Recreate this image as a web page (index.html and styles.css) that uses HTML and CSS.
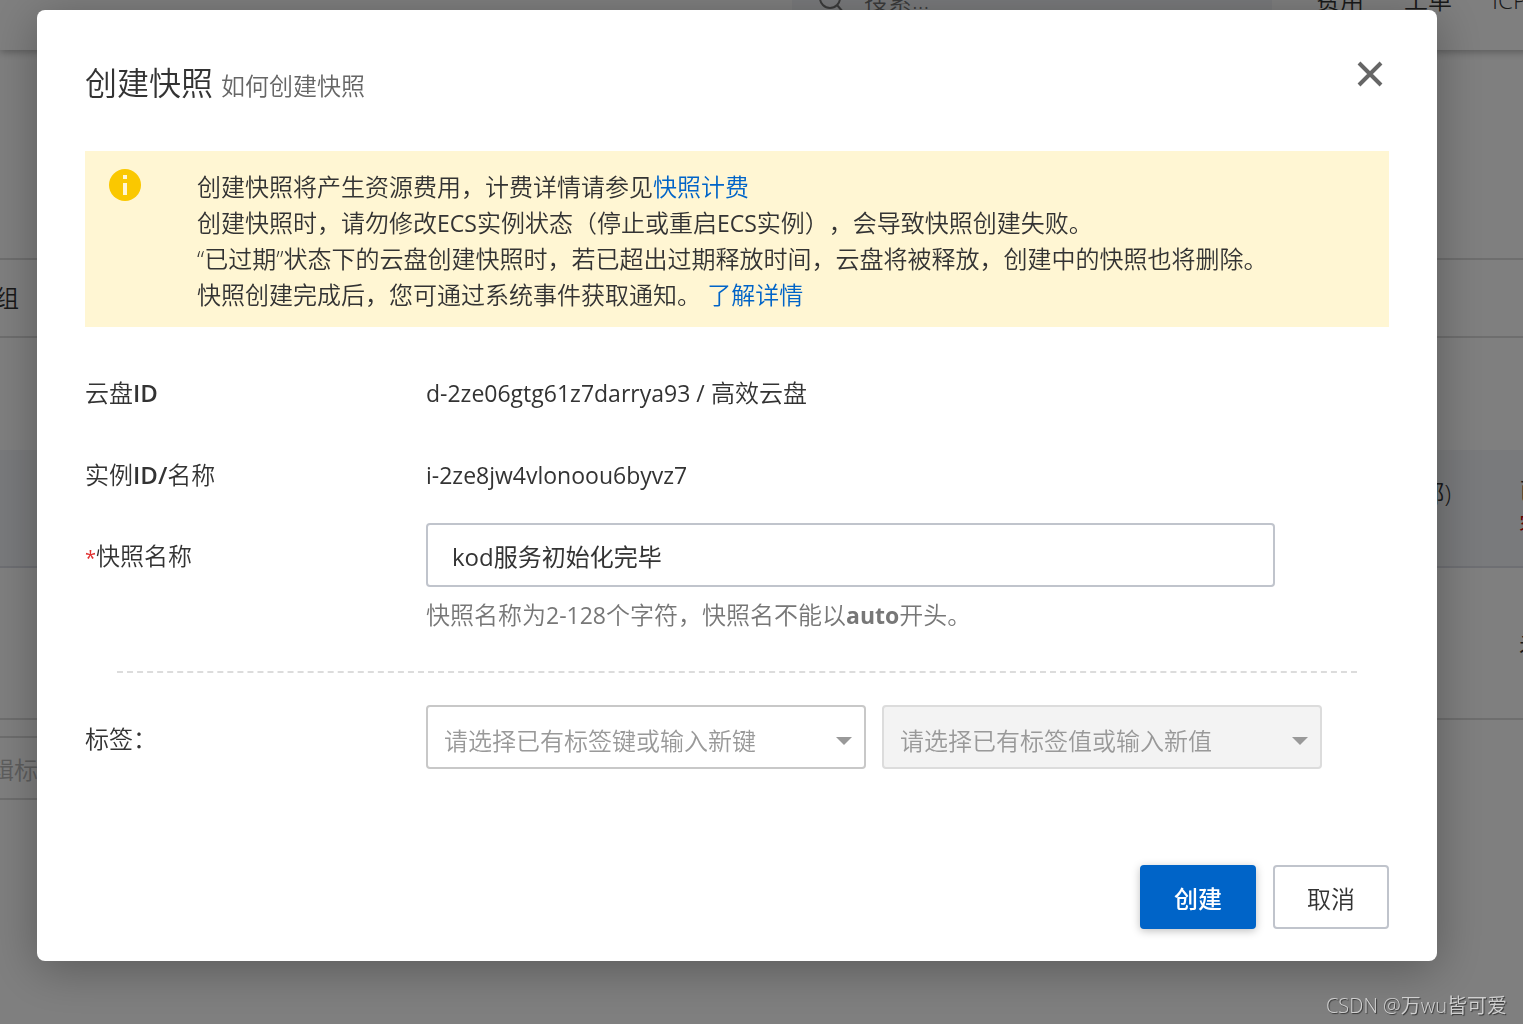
FILE: index.html
```html
<!DOCTYPE html>
<html lang="zh-CN">
<head>
<meta charset="utf-8">
<meta name="viewport" content="width=device-width, initial-scale=1">
<title>创建快照</title>
<link rel="stylesheet" href="styles.css">
</head>
<body>
<div class="console">
  <header class="topbar">
    <div class="search">
      <svg class="search-icon" viewBox="0 0 26 26" aria-hidden="true"><circle cx="12" cy="11" r="10"/><path d="M19 18l6 7"/></svg>
      <span>搜索...</span>
    </div>
    <nav class="topnav"><a href="#">费用</a><a href="#">工单</a><a href="#">ICP备案</a></nav>
  </header>
  <main class="list">
    <div class="row row-head"><span class="cell-first">资源组</span></div>
    <div class="row row-filter"></div>
    <div class="row row-selected"><span class="cell-mid">(全部)</span><span class="cell-last">已挂载<br><em>容量</em></span></div>
    <div class="row row-plain"><span class="cell-last">未设置</span></div>
    <div class="bulk"><button type="button" class="bulk-button">编辑标签</button></div>
  </main>
</div>

<div class="overlay">
  <section class="dialog" role="dialog" aria-modal="true" aria-labelledby="dialog-title">
    <header class="dialog-head">
      <h1 id="dialog-title">创建快照</h1>
      <a class="help" href="#">如何创建快照</a>
      <button type="button" class="close" aria-label="关闭">
        <svg viewBox="0 0 28 28" aria-hidden="true"><path d="M3 3l22 22M25 3L3 25"/></svg>
      </button>
    </header>

    <div class="notice">
      <svg class="notice-icon" viewBox="0 0 32 32" aria-hidden="true"><circle cx="16" cy="16" r="16" fill="#fac800"/><path fill="#fff6d3" d="M14 6h4v4h-4zM14 14h4v12h-4z"/></svg>
      <div class="notice-text">
        <p>创建快照将产生资源费用，计费详情请参见<a href="#">快照计费</a></p>
        <p>创建快照时，请勿修改<span class="latin">ECS</span>实例状态（停止或重启<span class="latin">ECS</span>实例），会导致快照创建失败。</p>
        <p>“已过期”状态下的云盘创建快照时，若已超出过期释放时间，云盘将被释放，创建中的快照也将删除。</p>
        <p>快照创建完成后，您可通过系统事件获取通知。 <a href="#">了解详情</a></p>
      </div>
    </div>

    <form class="form">
      <div class="field">
        <span class="label">云盘<b>ID</b></span>
        <span class="value"><span class="latin">d-2ze06gtg61z7darrya93 /</span> 高效云盘</span>
      </div>
      <div class="field">
        <span class="label">实例<b>ID/</b>名称</span>
        <span class="value"><span class="latin">i-2ze8jw4vlonoou6byvz7</span></span>
      </div>
      <div class="field field-name">
        <label class="label" for="snapshot-name"><i class="required">*</i>快照名称</label>
        <input class="text-input" id="snapshot-name" type="text" value="kod服务初始化完毕" aria-describedby="name-hint">
        <p class="hint" id="name-hint">快照名称为<span class="latin">2-128</span>个字符，快照名不能以<b class="latin">auto</b>开头。</p>
      </div>
      <hr class="divider">
      <div class="field">
        <label class="label" for="tag-key">标签：</label>
        <div class="tags">
          <div class="select-box">
            <select id="tag-key"><option>请选择已有标签键或输入新键</option></select>
          </div>
          <div class="select-box">
            <select aria-label="标签值" disabled><option>请选择已有标签值或输入新值</option></select>
          </div>
        </div>
      </div>
      <div class="actions">
        <button type="submit" class="button button-primary">创建</button>
        <button type="button" class="button">取消</button>
      </div>
    </form>
  </section>
  <div class="watermark">CSDN @万wu皆可爱</div>
</div>
</body>
</html>
```
FILE: styles.css
```css
* {
  box-sizing: border-box;
}

body {
  margin: 0;
  min-height: 100vh;
  overflow: hidden;
  background: #fff;
  color: #333;
  font: 350 24px/36px "Open Sans", "Noto Sans CJK SC", sans-serif;
  text-spacing-trim: space-all;
}

h1,
p {
  margin: 0;
  font-weight: inherit;
}

a {
  color: #0064c8;
  text-decoration: none;
}

/* Latin runs set a touch smaller and firmer beside the Chinese text */
.latin {
  font-size: 23px;
  font-weight: 400;
  line-height: 1;
}

b {
  font-weight: 600;
}

b.latin {
  font-weight: 700;
}

i,
em {
  font-style: normal;
}

button,
input,
select {
  font: inherit;
  color: inherit;
}

/* Console page behind the dialog, scrolled a little */
.console {
  margin-top: -46px;
}

.topbar {
  display: flex;
  justify-content: flex-end;
  align-items: center;
  height: 96px;
  margin-right: -52px;
  padding-bottom: 4px;
  box-shadow: 0 2px 8px rgba(0, 0, 0, 0.3);
}

.search {
  display: flex;
  align-items: center;
  gap: 20px;
  width: 480px;
  height: 64px;
  margin-right: 44px;
  padding-left: 26px;
  background: #f3f5f8;
  color: #777;
}

.search-icon {
  width: 26px;
  height: 26px;
  fill: none;
  stroke: #777;
  stroke-width: 2;
}

.topnav {
  display: flex;
  gap: 40px;
  white-space: nowrap;
}

.topnav a {
  color: #333;
}

.list {
  padding-top: 208px;
}

.row {
  display: flex;
  justify-content: flex-end;
  align-items: center;
  border-bottom: 2px solid #dcdcdc;
  white-space: nowrap;
}

.row-head {
  justify-content: flex-start;
  height: 80px;
  border-top: 2px solid #dcdcdc;
}

.cell-first {
  margin-left: -53px;
}

.row-filter {
  height: 112px;
  border: 0;
}

.row-selected {
  height: 118px;
  background: #f3f5f8;
  border-color: #dcdee6;
  line-height: 34px;
}

.cell-mid {
  align-self: flex-start;
  margin: 26px 68px 0 0;
}

.cell-last {
  width: 72px;
  margin-right: -68px;
}

.cell-last em {
  color: #c00;
}

.row-plain {
  height: 152px;
}

.bulk {
  padding-top: 16px;
}

.bulk-button {
  height: 64px;
  margin-left: -68px;
  padding: 4px 32px 0;
  border: 2px solid #dcdcdc;
  background: #fff;
  color: #bbb;
}

/* Dialog */
.overlay {
  position: fixed;
  inset: 0;
  padding: 10px 86px 0 37px;
  background: rgba(0, 0, 0, 0.5);
}

.dialog {
  padding: 48px 48px 32px;
  border-radius: 8px;
  background: #fff;
  box-shadow: 0 8px 48px rgba(0, 0, 0, 0.3);
}

.dialog-head {
  display: flex;
  align-items: baseline;
  gap: 8px;
  height: 93px;
}

.dialog-head h1 {
  font-size: 32px;
  line-height: 50px;
}

.help {
  color: #666;
}

.close {
  align-self: flex-start;
  width: 36px;
  height: 32px;
  margin-left: auto;
  padding: 2px 3px;
  border: 0;
  background: none;
}

.close svg {
  display: block;
  width: 28px;
  height: 28px;
  fill: none;
  stroke: #666;
  stroke-width: 4;
}

.notice {
  display: flex;
  gap: 56px;
  padding: 18px 24px 14px;
  background: #fff6d3;
}

.notice-icon {
  flex: none;
  width: 32px;
  height: 32px;
}

.form {
  padding-top: 48px;
}

.field {
  display: grid;
  grid-template-columns: 341px 1fr;
  align-items: center;
}

.label,
.value {
  line-height: 36px;
  padding-bottom: 46px;
}

.hint {
  grid-column: 2;
  margin-top: 10px;
  color: #777;
}

label.label {
  padding: 4px 0 0;
}

.field-name {
  margin-top: -16px;
}

.required {
  color: #e02f2f;
  font-size: 20px;
  font-weight: 500;
}

.text-input {
  width: calc(100% - 114px);
  height: 64px;
  padding: 0 24px;
  border: 2px solid #c0c4cc;
  border-radius: 4px;
  background: #fff;
  font-weight: 400;
}

.divider {
  margin: 38px 32px 32px;
  border: 0;
  border-top: 2px dashed #dcdcdc;
}

.tags {
  display: flex;
  gap: 16px;
}

.select-box {
  position: relative;
  flex: 0 1 440px;
}

.select-box::after {
  content: "";
  position: absolute;
  top: 32px;
  right: 14px;
  border: 8px solid transparent;
  border-top-color: #999;
  border-bottom: 0;
  pointer-events: none;
}

.select-box select {
  width: 100%;
  height: 64px;
  padding: 8px 40px 0 16px;
  border: 2px solid #c8c8c8;
  border-radius: 4px;
  appearance: none;
  background: #fff;
  color: #999;
}

.select-box select:disabled {
  border-color: #dcdcdc;
  background: #f3f3f3;
  opacity: 1;
}

.actions {
  display: flex;
  justify-content: flex-end;
  gap: 17px;
  padding-top: 96px;
}

.button {
  width: 116px;
  height: 64px;
  padding: 4px 0 0;
  border: 2px solid #c0c4cc;
  border-radius: 4px;
  background: #fff;
}

.button-primary {
  border-color: #0064c8;
  background: #0064c8;
  box-shadow: 0 2px 8px rgba(0, 0, 0, 0.25);
  color: #fff;
  font-weight: 500;
}

.watermark {
  position: absolute;
  right: 16px;
  bottom: 3px;
  color: #d0d0d0;
  font-size: 20px;
  line-height: 30px;
  text-shadow: 1px 1px 1px #333;
}
```
